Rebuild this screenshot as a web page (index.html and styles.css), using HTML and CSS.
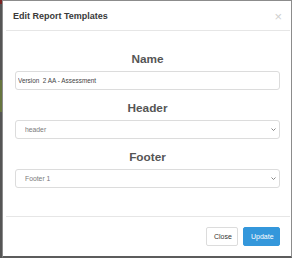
FILE: index.html
```html
<!doctype html>
<html>
<head>
	<meta charset="UTF-8">
	<meta name="viewport" content="width=device-width, initial-scale=1.0">
	<title>Edit Report Templates</title>
	<link rel="stylesheet" href="styles.css">
</head>
<body>
	<div class="stage">
		<div class="backdrop-edge"></div>
		<div class="modal">
			<div class="modal-header">
				<span class="modal-title">Edit Report Templates</span>
				<span class="close-x">&times;</span>
			</div>
			<div class="modal-body">
				<h3>Name</h3>
				<input type="text" class="field text-field" value="Version_2 AA - Assessment">
				<h3>Header</h3>
				<div class="select-wrap">
					<select class="field">
						<option>header</option>
					</select>
					<svg class="chevron" width="5" height="3" viewBox="0 0 5 3"><path d="M0.5 0.5 L2.5 2.5 L4.5 0.5" fill="none" stroke="#777" stroke-width="0.9"/></svg>
				</div>
				<h3>Footer</h3>
				<div class="select-wrap">
					<select class="field">
						<option>Footer 1</option>
					</select>
					<svg class="chevron" width="5" height="3" viewBox="0 0 5 3"><path d="M0.5 0.5 L2.5 2.5 L4.5 0.5" fill="none" stroke="#777" stroke-width="0.9"/></svg>
				</div>
			</div>
			<div class="modal-footer">
				<button type="button" class="btn btn-default">Close</button>
				<button type="button" class="btn btn-primary">Update</button>
			</div>
		</div>
	</div>
</body>
</html>
```

FILE: styles.css
```css
* {
	padding: 0;
	margin: 0;
	box-sizing: border-box;
}
body {
	background-color: #fff;
	font-family: "Liberation Sans", Arial, Helvetica, sans-serif;
}
.stage {
	display: flex;
	height: 258px;
}
.backdrop-edge {
	width: 2px;
	height: 258px;
	background: linear-gradient(to bottom, #7a2424 0, #7a2424 4px, #555 4px, #555 80px, #67753f 80px, #67753f 112px, #555 112px);
}
.modal {
	display: flex;
	flex-direction: column;
	width: 290px;
	height: 258px;
	background-color: #fff;
	border: 1px solid #8c8c8c;
	border-bottom: 2px solid #5c5c5c;
}
.modal-header {
	display: flex;
	align-items: center;
	justify-content: space-between;
	height: 30px;
	margin: 0 1px 0 3px;
	padding: 1px 8px 0 7px;
	border-bottom: 1px solid #e6e6e6;
}
.modal-title {
	font-size: 9px;
	font-weight: bold;
	color: #3a3a3a;
}
.close-x {
	font-size: 13px;
	line-height: 1;
	color: #d0d0d0;
}
.modal-body {
	flex: 1;
	padding: 20px 11px 0 12px;
}
h3 {
	font-size: 11.8px;
	font-weight: bold;
	color: #555;
	text-align: center;
	line-height: 16px;
	margin-top: 10px;
	margin-bottom: 4px;
}
h3:first-child {
	margin-top: 0;
}
.field {
	-webkit-appearance: none;
	appearance: none;
	display: block;
	width: 100%;
	height: 19px;
	line-height: 17px;
	border: 1px solid #dcdcdc;
	border-radius: 3px;
	background-color: #fff;
	font-family: "Liberation Sans", Arial, Helvetica, sans-serif;
	font-size: 6.8px;
	color: #7a7a7a;
	-webkit-text-fill-color: #7a7a7a;
	padding: 0 9px;
	outline: none;
}
.field option {
	color: #7a7a7a;
}
.text-field {
	font-size: 6.4px;
	color: #444;
	-webkit-text-fill-color: #444;
	padding: 0 2px;
}
.select-wrap {
	position: relative;
}
.chevron {
	position: absolute;
	right: 4px;
	top: 8px;
}
.modal-footer {
	display: flex;
	justify-content: flex-end;
	gap: 5px;
	margin: 0 1px 0 3px;
	padding: 10px 10px 0 0;
	height: 40px;
	border-top: 1px solid #e6e6e6;
}
.btn {
	height: 19px;
	font-family: "Liberation Sans", Arial, Helvetica, sans-serif;
	font-size: 7px;
	padding: 0 7px;
	border-radius: 2px;
}
.btn-default {
	width: 32px;
	background-color: #fff;
	color: #333;
	border: 1px solid #dcdcdc;
}
.btn-primary {
	width: 37px;
	background-color: #3497db;
	color: #fff;
	border: 1px solid #3497db;
}
```
